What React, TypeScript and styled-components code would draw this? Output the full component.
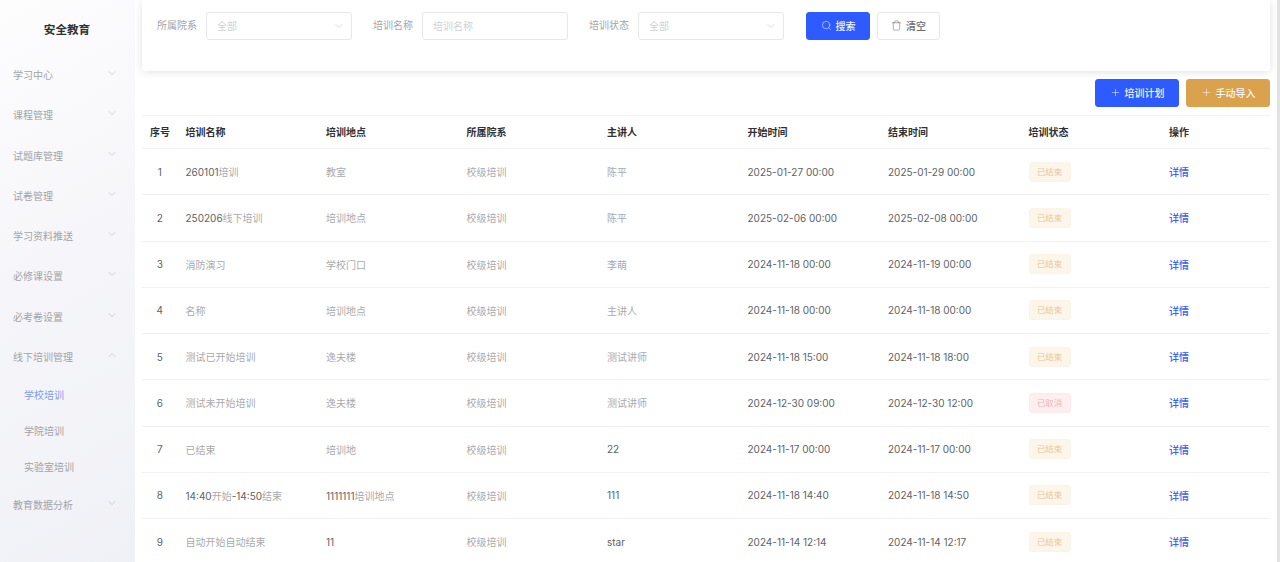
import { ChevronDown, ChevronUp, Plus, Search, Trash } from "lucide-react";
import styled, { createGlobalStyle } from "styled-components";

const GlobalStyle = createGlobalStyle`
    html, body {
        margin: 0;
        height: 100%;
        overflow: hidden;
        background: #ffffff;
        font-family: Inter, "Noto Sans CJK SC", sans-serif;
    }
    * {
        box-sizing: border-box;
    }
`

const Page = styled.div`
    display: flex;
    height: 562px;
    overflow: hidden;
`
const Sidebar = styled.aside`
    flex: 0 0 135px;
    background: linear-gradient(150deg, #fdfdfe 0%, #f6f6fa 45%, #f0f1f6 100%);
`
const Logo = styled.div`
    height: 54.3px;
    padding-top: 22px;
    padding-right: 1px;
    text-align: center;
    font-size: 11.6px;
    line-height: 16px;
    font-weight: 700;
    color: #303133;
`
const MenuItem = styled.div`
    display: flex;
    align-items: center;
    justify-content: space-between;
    height: 40.3px;
    padding: 0 17px 0 13px;
    font-size: 10px;
    color: #a2a3a6;
    svg {
        color: #a9aaaf;
        margin-top: -3px;
    }
`
const SubItem = styled.div<{ $active?: boolean }>`
    height: 36px;
    line-height: 37px;
    padding-left: 24px;
    font-size: 10px;
    color: ${(p) => (p.$active ? "#7f9bf5" : "#a2a3a6")};
`
const Main = styled.main`
    flex: 1;
    min-width: 0;
    padding-right: 7px;
    padding-left: 7px;
    border-right: 3px solid #e2e2e2;
`
const FilterCard = styled.section`
    display: flex;
    align-items: flex-start;
    height: 71px;
    padding: 12px 0 0 15px;
    background: #ffffff;
    border-radius: 0 0 3px 3px;
    box-shadow: 0 1px 8px rgba(0, 0, 0, 0.12);
`
const FilterLabel = styled.label`
    width: 49px;
    line-height: 27px;
    font-size: 10px;
    color: #a4a5a8;
`
const Field = styled.div`
    display: flex;
    align-items: center;
    justify-content: space-between;
    width: 146px;
    height: 28px;
    margin-right: 21px;
    padding: 0 6px 1px 10px;
    border: 1px solid #e6e7eb;
    border-radius: 3px;
    font-size: 10px;
    color: #cfd0d3;
    svg {
        color: #bcbdc2;
    }
`
const Button = styled.button<{ $tone: "blue" | "plain" | "gold" }>`
    display: inline-flex;
    align-items: center;
    justify-content: center;
    gap: 4px;
    height: 28px;
    padding: 0 0 1px;
    border: 1px solid ${(p) => (p.$tone === "plain" ? "#e6e7eb" : p.$tone === "blue" ? "#2e5bff" : "#dba24d")};
    border-radius: 3px;
    background: ${(p) => (p.$tone === "plain" ? "#ffffff" : p.$tone === "blue" ? "#2e5bff" : "#dba24d")};
    color: ${(p) => (p.$tone === "plain" ? "#6b6c70" : "#f4f6ff")};
    font-family: inherit;
    font-size: 10px;
    font-weight: 500;
`
const SearchButton = styled(Button)`
    width: 64px;
    margin-left: 1px;
`
const ClearButton = styled(Button)`
    width: 63px;
    margin-left: 7px;
`
const Actions = styled.div`
    display: flex;
    justify-content: flex-end;
    gap: 7px;
    padding-top: 8px;
    height: 44px;
`
const ActionButton = styled(Button)`
    width: 84px;
`
const Table = styled.table`
    width: 1128px;
    table-layout: fixed;
    border-collapse: collapse;
    border-top: 1px solid #f4f4f6;
    font-size: 10px;
`
const HeadCell = styled.th`
    height: 33px;
    padding: 0 8px 2px;
    text-align: left;
    font-weight: 700;
    color: #303133;
    border-bottom: 1px solid #f1f1f4;
    white-space: nowrap;
`
const IndexHead = styled(HeadCell)`
    text-align: center;
`
const Row = styled.tr`
    height: 46.25px;
    border-bottom: 1px solid #f1f1f4;
`
const Cell = styled.td`
    padding: 0 8px;
    color: #606266;
    font-size: 10px;
    white-space: nowrap;
`
const IndexCell = styled(Cell)`
    text-align: center;
`
const Han = styled.span`
    color: #a9aaad;
`
const Tag = styled.span<{ $cancelled?: boolean }>`
    display: inline-block;
    width: 42px;
    height: 20px;
    line-height: 18px;
    text-align: center;
    font-size: 8.4px;
    border-radius: 3px;
    border: 1px solid ${(p) => (p.$cancelled ? "#fdeaea" : "#fcf3e6")};
    background: ${(p) => (p.$cancelled ? "#fdeff0" : "#fcf5ea")};
    color: ${(p) => (p.$cancelled ? "#f0b4b8" : "#e8c794")};
`
const DetailLink = styled.a`
    font-size: 10px;
    font-weight: 500;
    color: #3a64f0;
    cursor: pointer;
`

const MENU_TOP = ["学习中心", "课程管理", "试题库管理", "试卷管理", "学习资料推送", "必修课设置", "必考卷设置"];
const COLUMNS = ["培训名称", "培训地点", "所属院系", "主讲人", "开始时间", "结束时间", "培训状态", "操作"];

const ROWS = [
    ["260101培训", "教室", "陈平", "2025-01-27 00:00", "2025-01-29 00:00", "已结束"],
    ["250206线下培训", "培训地点", "陈平", "2025-02-06 00:00", "2025-02-08 00:00", "已结束"],
    ["消防演习", "学校门口", "李萌", "2024-11-18 00:00", "2024-11-19 00:00", "已结束"],
    ["名称", "培训地点", "主讲人", "2024-11-18 00:00", "2024-11-18 00:00", "已结束"],
    ["测试已开始培训", "逸夫楼", "测试讲师", "2024-11-18 15:00", "2024-11-18 18:00", "已结束"],
    ["测试未开始培训", "逸夫楼", "测试讲师", "2024-12-30 09:00", "2024-12-30 12:00", "已取消"],
    ["已结束", "培训地", "22", "2024-11-17 00:00", "2024-11-17 00:00", "已结束"],
    ["14:40开始-14:50结束", "1111111培训地点", "111", "2024-11-18 14:40", "2024-11-18 14:50", "已结束"],
    ["自动开始自动结束", "11", "star", "2024-11-14 12:14", "2024-11-14 12:17", "已结束"],
];

// the chinese runs are lighter than the digits in the table
const Mixed = ({ text }: { text: string }) => (
    <>
        {text.split(/([\u4e00-\u9fff]+)/).map((part, i) =>
            i % 2 ? <Han key={i}>{part}</Han> : part
        )}
    </>
);

const App = () => {
    return (
        <Page>
            <GlobalStyle />
            <Sidebar>
                <Logo>安全教育</Logo>
                {MENU_TOP.map((m) => (
                    <MenuItem key={m}>
                        {m}
                        <ChevronDown size={12} strokeWidth={1} />
                    </MenuItem>
                ))}
                <MenuItem>
                    线下培训管理
                    <ChevronUp size={12} strokeWidth={1} />
                </MenuItem>
                <SubItem $active>学校培训</SubItem>
                <SubItem>学院培训</SubItem>
                <SubItem>实验室培训</SubItem>
                <MenuItem>
                    教育数据分析
                    <ChevronDown size={12} strokeWidth={1} />
                </MenuItem>
            </Sidebar>
            <Main>
                <FilterCard>
                    <FilterLabel>所属院系</FilterLabel>
                    <Field>
                        全部
                        <ChevronDown size={12} strokeWidth={1} />
                    </Field>
                    <FilterLabel>培训名称</FilterLabel>
                    <Field>培训名称</Field>
                    <FilterLabel>培训状态</FilterLabel>
                    <Field>
                        全部
                        <ChevronDown size={12} strokeWidth={1} />
                    </Field>
                    <SearchButton $tone="blue">
                        <Search size={11} strokeWidth={1.2} />
                        搜索
                    </SearchButton>
                    <ClearButton $tone="plain">
                        <Trash size={11} strokeWidth={1.2} />
                        清空
                    </ClearButton>
                </FilterCard>
                <Actions>
                    <ActionButton $tone="blue">
                        <Plus size={11} strokeWidth={1.2} />
                        培训计划
                    </ActionButton>
                    <ActionButton $tone="gold">
                        <Plus size={11} strokeWidth={1.2} />
                        手动导入
                    </ActionButton>
                </Actions>
                <Table>
                    <colgroup>
                        <col width={35.5} />
                        <col width={140.5} span={7} />
                        <col width={109} />
                    </colgroup>
                    <thead>
                        <tr>
                            <IndexHead>序号</IndexHead>
                            {COLUMNS.map((c) => (
                                <HeadCell key={c}>{c}</HeadCell>
                            ))}
                        </tr>
                    </thead>
                    <tbody>
                        {ROWS.map((r, i) => (
                            <Row key={i}>
                                <IndexCell>{i + 1}</IndexCell>
                                <Cell><Mixed text={r[0]} /></Cell>
                                <Cell><Mixed text={r[1]} /></Cell>
                                <Cell><Han>校级培训</Han></Cell>
                                <Cell><Mixed text={r[2]} /></Cell>
                                <Cell>{r[3]}</Cell>
                                <Cell>{r[4]}</Cell>
                                <Cell><Tag $cancelled={r[5] === "已取消"}>{r[5]}</Tag></Cell>
                                <Cell><DetailLink>详情</DetailLink></Cell>
                            </Row>
                        ))}
                    </tbody>
                </Table>
            </Main>
        </Page>
    );
};

export default App;
